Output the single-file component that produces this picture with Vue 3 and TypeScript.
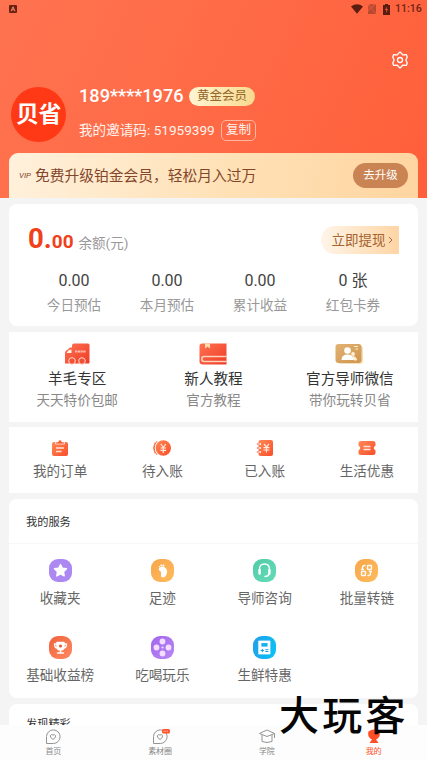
<script setup lang="ts">
interface Stat { value: string; label: string }
interface Item { icon: string; label: string }
interface Entry extends Item { note: string }

const stats: Stat[] = [
  { value: '0.00', label: '今日预估' },
  { value: '0.00', label: '本月预估' },
  { value: '0.00', label: '累计收益' },
  { value: '0 张', label: '红包卡券' },
]
const entries: Entry[] = [
  { icon: 'truck', label: '羊毛专区', note: '天天特价包邮' },
  { icon: 'book', label: '新人教程', note: '官方教程' },
  { icon: 'contact', label: '官方导师微信', note: '带你玩转贝省' },
]
const orders: Item[] = [
  { icon: 'clipboard', label: '我的订单' },
  { icon: 'coin', label: '待入账' },
  { icon: 'ledger', label: '已入账' },
  { icon: 'ticket', label: '生活优惠' },
]
const services: Item[] = [
  { icon: 'star', label: '收藏夹' },
  { icon: 'foot', label: '足迹' },
  { icon: 'headset', label: '导师咨询' },
  { icon: 'link', label: '批量转链' },
  { icon: 'trophy', label: '基础收益榜' },
  { icon: 'reel', label: '吃喝玩乐' },
  { icon: 'calc', label: '生鲜特惠' },
]
const tabs: Item[] = [
  { icon: 'home', label: '首页' },
  { icon: 'material', label: '素材圈' },
  { icon: 'school', label: '学院' },
  { icon: 'mine', label: '我的' },
]
</script>

<template>
  <div class="screen">
    <svg class="defs" width="0" height="0" aria-hidden="true">
      <defs>
        <linearGradient id="red" x1="0" y1="0" x2="1" y2="1"><stop offset="0" stop-color="#ff7352" /><stop offset="1" stop-color="#ee3b26" /></linearGradient>
        <linearGradient id="orange" x1="0" y1="0" x2="1" y2="1"><stop offset="0" stop-color="#ff8a55" /><stop offset="1" stop-color="#f94d2b" /></linearGradient>
        <linearGradient id="gold" x1="0" y1="0" x2="1" y2="1"><stop offset="0" stop-color="#e2b273" /><stop offset="1" stop-color="#cf964e" /></linearGradient>
      </defs>
    </svg>
    <main class="content">
      <header class="header">
        <div class="status">
          <svg class="status-app" viewBox="0 0 8 8"><rect width="8" height="8" rx="1" fill="#69200f" /><path d="M2 6.300 4 1.800 6 6.300M3 4.800h2" fill="none" stroke="#f58b70" stroke-width="1" /></svg>
          <div class="status-right">
            <svg width="12" height="10" viewBox="0 0 12 10"><path d="M0 2.500Q6-1.800 12 2.500L6 9.800Z" fill="#5b1d10" /></svg>
            <svg width="8" height="10" viewBox="0 0 8 10"><path d="M8 0v10H0V7Z" fill="#b84830" /><path d="M0 2 2 0h5L0 7ZM1 1l7 9" fill="#b84830" stroke="#e65b3e" stroke-width=".8" /></svg>
            <svg width="7" height="11" viewBox="0 0 7 11"><path d="M2 0h3v1h2v10H0V1h2Z" fill="#5b1d10" /><path d="M4 2.500 2 6h1.500L3 9l2-3.800H3.500Z" fill="#f36546" /></svg>
            <span class="time">11:16</span>
          </div>
        </div>
        <svg class="gear" viewBox="0 0 18 18" fill="none" stroke="#fff" stroke-width="1.300" stroke-linejoin="round">
          <path d="M7.200 2.700 9 .9l1.800 1.800.8 1.200 3.900-.2.700 2.500-1.400 2.800 1.400 2.800-.7 2.500-3.900-.2-.8 1.200L9 17.100l-1.800-1.800-.8-1.200-3.900.2-.7-2.500L3.200 9 1.800 6.200l.7-2.500 3.900.2Z" /><circle cx="9" cy="9" r="2.500" />
        </svg>
        <section class="profile">
          <div class="avatar">贝省</div>
          <div class="profile-info">
            <div class="name-row"><span class="phone">189****1976</span><span class="level">黄金会员</span></div>
            <div class="code-row"><span>我的邀请码: 51959399</span><span class="copy">复制</span></div>
          </div>
        </section>
        <section class="vip">
          <span class="vip-mark">VIP</span>
          <span class="vip-text">免费升级铂金会员，轻松月入过万</span>
          <span class="upgrade">去升级</span>
        </section>
      </header>

      <section class="card wallet">
        <div class="balance-row">
          <div class="balance"><b class="big">0.</b><b class="cents">00</b><span class="unit">余额(元)</span></div>
          <div class="withdraw">立即提现<svg width="5" height="8" viewBox="0 0 5 8"><path d="m1 1 3 3-3 3" fill="none" stroke="#ad6937" /></svg></div>
        </div>
        <div class="stats">
          <div v-for="s in stats" :key="s.label" class="stat"><span class="value">{{ s.value }}</span><span class="stat-label">{{ s.label }}</span></div>
        </div>
      </section>

      <section class="card entries">
        <div v-for="e in entries" :key="e.icon" class="entry">
          <svg v-if="e.icon === 'truck'" width="26" height="22" viewBox="0 0 26 22">
            <path d="M10 .5h14q1.500 0 1.500 1.500v17.500q0 1-1 1H1V10q0-2 2-3l3-2.500h2V2.500q0-2 2-2Z" fill="url(#red)" /><path d="M2.500 10 5 6.800h2.500v3.300Z" fill="#fff3e9" /><path d="M11 8.500h11" stroke="#ffb9a6" stroke-width="1.800" stroke-dasharray="2.300 .4" /><circle cx="8" cy="18" r="3.300" fill="#f25134" stroke="#ffd9ce" stroke-width="1" /><circle cx="18" cy="18" r="3.300" fill="#f25134" stroke="#ffd9ce" stroke-width="1" />
          </svg>
          <svg v-else-if="e.icon === 'book'" width="28" height="22" viewBox="0 0 28 22">
            <path d="M3 .5h24.500v21H4q-3.500 0-3.500-3V3q0-2.500 2.500-2.500Z" fill="url(#red)" /><path d="M6 .5h5v5l-2.500-1.700L6 5.500Z" fill="#ffdca9" /><path d="M27.500 13.500H5q-2.200 0-2.200 2.500T5 18.500h22.500" fill="none" stroke="#ffd3bb" stroke-width="1.600" />
          </svg>
          <svg v-else class="contact-icon" width="28" height="22" viewBox="0 0 28 22">
            <rect x="3" y="3" width="25" height="18" rx="3" fill="#f5dfb9" /><rect x=".5" y="1" width="26" height="19" rx="3" fill="url(#gold)" /><circle cx="12.500" cy="7.500" r="3.300" fill="#fff" /><path d="M6.500 17q0-5.500 6-5.500t6 5.500Z" fill="#fff" /><circle cx="18" cy="11" r="1.900" fill="#fff0d8" /><path d="M18 13.500q3.500.5 3.500 3.500H19ZM19 3.500h4M20.500 6H23" fill="#fff0d8" stroke="#fff0d8" />
          </svg>
          <span class="entry-title">{{ e.label }}</span>
          <span class="entry-note">{{ e.note }}</span>
        </div>
      </section>

      <section class="card orders">
        <div v-for="o in orders" :key="o.icon" class="order">
          <svg width="18" height="18" viewBox="0 0 18 18">
            <g v-if="o.icon === 'clipboard'"><rect x="1" y="3" width="16" height="14" rx="2" fill="url(#orange)" /><path d="M4.500 5V3H7l1-2h2l1 2h2.500v2Z" fill="#f75a34" stroke="#fff" stroke-width=".7" /><path d="M5 9h8M5 12.500h5.500" stroke="#ffe1d4" stroke-width="1.300" /></g>
            <g v-else-if="o.icon === 'coin'"><path d="M4 2Q-1.500 9 4 16M2 3.500q-3 5.500 0 11" fill="none" stroke="#f76b45" stroke-width=".9" /><circle cx="10.300" cy="9" r="7.700" fill="url(#orange)" /><path d="m7.800 5 2.500 3.500L12.800 5M7.500 9h5.600M7.500 11.300h5.600M10.300 8.500V14" fill="none" stroke="#ffeadb" stroke-width="1.200" /></g>
            <g v-else-if="o.icon === 'ledger'"><rect x="2.500" y="1" width="14.500" height="16" rx="2" fill="url(#orange)" /><path d="M.8 5h4M.8 9h4M.8 13h4" stroke="#fff" stroke-width="2" /><path d="M.8 5h3M.8 9h3M.8 13h3" stroke="#f25332" stroke-width="1.100" /><path d="m8 5 2.500 3L13 5M7.500 8.700h6M7.500 11h6M10.500 8v5.500" fill="none" stroke="#ffeadb" stroke-width="1.200" /></g>
            <g v-else><path d="M3 2h12q2.500 0 2.500 2.500v2q-3.500 2.500 0 5v2q0 2.500-2.500 2.500H3Q.5 16 .5 13.500v-2q3.500-2.500 0-5v-2Q.5 2 3 2Z" fill="url(#orange)" /><path d="M5.500 7.500h7M5.500 10.500h7" stroke="#ffe5d7" stroke-width="1.300" /></g>
          </svg>
          <span class="label">{{ o.label }}</span>
        </div>
      </section>

      <section class="card services">
        <h2 class="section-title">我的服务</h2>
        <div class="service-grid">
          <div v-for="s in services" :key="s.icon" class="service">
            <span class="tile" :class="s.icon">
              <svg width="23" height="23" viewBox="0 0 23 23" fill="none" stroke="#fff" stroke-width="1.400" stroke-linecap="round" stroke-linejoin="round">
                <path v-if="s.icon === 'star'" d="m11.500 5.500 1.900 3.700 4.100.6-3 2.900.7 4.200-3.700-2-3.700 2 .7-4.200-3-2.900 4.100-.6Z" fill="#fff" />
                <g v-else-if="s.icon === 'foot'" fill="#fff" stroke="none"><path d="M8 9.300q2.700-2.900 5.400-1.200 3.800 2.600 2.400 6.500-1.300 4-3.800 3.900-2.600-.1-1.900-3.600.3-2.100-1.100-2.800-2-.9-1-2.800Z" /><circle cx="8.500" cy="7.800" r=".7" /><circle cx="10.200" cy="6.500" r=".9" /><circle cx="12.400" cy="6.500" r="1.100" /></g>
                <g v-else-if="s.icon === 'headset'"><path d="M6.500 12V10.500Q6.500 5 11.500 5t5 5.500V12" stroke-width="1.300" /><path d="M6.600 11v3.500M16.400 11v3.500" stroke-width="2.500" /><path d="M16 15q-.5 2.500-4 2.500" /></g>
                <g v-else-if="s.icon === 'link'" stroke-width="1.300"><rect x="12.500" y="6.500" width="4" height="4" rx=".5" /><rect x="6.500" y="12.500" width="4" height="4" rx=".5" /><path d="M10 6.500h-.5q-2 0-2 2v2M13 16.500h.5q2 0 2-2v-2M6.500 10.500h2M14.500 12.500h2" /></g>
                <g v-else-if="s.icon === 'trophy'"><path d="M8 6.500h7v4q0 3.500-3.500 3.500T8 10.500Z" fill="#fff" /><path d="M8 8H5.500q0 4 3 4M15 8h2.500q0 4-3 4M11.500 14v3M8.500 17h6" /><circle cx="11.500" cy="10" r="1.600" fill="#ee5936" stroke="none" /></g>
                <g v-else-if="s.icon === 'reel'" fill="#f4deff" stroke="none"><circle cx="11.500" cy="5.500" r="2.900" /><circle cx="17.500" cy="11.500" r="2.900" /><circle cx="11.500" cy="17.500" r="2.900" /><circle cx="5.500" cy="11.500" r="2.900" /><circle cx="11.500" cy="11.500" r="1.100" /></g>
                <g v-else><path d="M6 5h11v13H6ZM8 7v4h7V7Z" fill="#fff" fill-rule="evenodd" stroke-width=".8" /><path d="M8 14.500h2.600M9.300 13.200v2.600M12.700 13.700h2.300M12.700 15.500H15" stroke="#159feb" stroke-width="1" /></g>
              </svg>
            </span>
            <span class="label">{{ s.label }}</span>
          </div>
        </div>
      </section>

      <section class="card discover"><h2 class="section-title">发现精彩</h2></section>
    </main>

    <nav class="tabs">
      <div v-for="t in tabs" :key="t.icon" class="tab" :class="{ active: t.icon === 'mine' }">
        <svg width="20" height="17" viewBox="0 0 20 17" fill="none" stroke="#949494" stroke-width="1">
          <g v-if="t.icon === 'home' || t.icon === 'material'"><path d="M3.500 15.500V8.500a6.800 6.800 0 1 1 6.800 7Z" /><path d="M10 11.500Q7 9.500 7.300 7.700 8.300 6 10 7q1.700-1 2.700.7.300 1.800-2.700 3.800Z" /><rect v-if="t.icon === 'material'" x="12" y="1" width="8" height="4.500" rx="1.500" fill="#ff532b" stroke="none" /><path v-if="t.icon === 'material'" d="M13.500 3.200h5" stroke="#ffc0ab" stroke-dasharray="1.200 .5" /></g>
          <g v-else-if="t.icon === 'school'"><path d="m2.500 5.500 7.500-3.500 7.500 3.500-7.500 3ZM5 7v6.500q5 2 10 0V7M17.500 5.500V10" /></g>
          <g v-else fill="#ff4d25" stroke="none"><path d="M4.500 3.500q5.500-4 11 0 1.500 5.500-3.500 8l2.500 3.500h-9L8 11.500Q3 9 4.500 3.500Z" /></g>
        </svg>
        <span>{{ t.label }}</span>
      </div>
    </nav>
    <div class="watermark">大玩客</div>
  </div>
</template>

<style>
body { margin: 0; overflow: hidden; }
</style>
<style scoped>
* { box-sizing: border-box; }
.screen { position: relative; display: flex; flex-direction: column; width: 427px; height: 760px; overflow: hidden; background: #f4f4f4; font-family: Roboto, "Noto Sans CJK SC", sans-serif; color: #444; white-space: nowrap; }
svg { display: block; flex-shrink: 0; }
.defs { position: absolute; }
.content { flex: 1; min-height: 0; overflow: hidden; }
.header { height: 198px; display: flex; flex-direction: column; background: linear-gradient(115deg, #ff7350 0%, #ff6b47 45%, #ff5f3a 100%); }
.status { height: 18px; padding: 0 6px 0 9px; display: flex; justify-content: space-between; align-items: center; }
.status-app { width: 8px; height: 8px; }
.status-right { display: flex; align-items: center; }
.status-right svg:nth-child(2) { margin-left: 5px; }
.status-right svg:nth-child(3) { margin-left: 7px; }
.time { width: 26px; margin-left: 5px; font-size: 10.500px; line-height: 18px; font-weight: 500; color: #6b2514; }
.gear { width: 18px; height: 18px; align-self: flex-end; margin: 33px 18px 0 0; }
.profile { display: flex; height: 63px; margin: 14px 0 0 11px; }
.avatar { width: 55px; height: 55px; margin-top: 4px; border-radius: 50%; background: #ff3916; color: #fff; font-size: 23px; line-height: 56px; font-weight: 700; text-align: center; letter-spacing: -0.5px; }
.profile-info { margin-left: 13px; }
.name-row { display: flex; align-items: center; height: 26px; color: #fff; }
.phone { width: 110px; font-size: 18.200px; line-height: 26px; font-weight: 500; }
.level { width: 66px; height: 19px; border-radius: 10px; background: linear-gradient(90deg, #fff5d3, #f8d98e); color: #94672b; font-size: 12.500px; line-height: 18px; text-align: center; }
.code-row { display: flex; align-items: center; height: 22px; margin-top: 10px; font-size: 13.600px; line-height: 20px; color: #fff3ec; }
.code-row > span:first-child { width: 142px; }
.copy { width: 35px; height: 21px; border: 1px solid #ffb69f; border-radius: 5px; line-height: 18px; font-size: 12.500px; text-align: center; }
.vip { display: flex; align-items: center; width: 409px; height: 45px; margin: 8px 0 0 9px; padding: 0 10px; flex-shrink: 0; border-radius: 9px 9px 0 0; background: linear-gradient(100deg, #fff1dc, #ffe2b8 50%, #ffd5a0); color: #84462a; }
.vip-mark { width: 16px; font-size: 8px; font-style: italic; font-weight: 400; }
.vip-text { font-size: 14.750px; line-height: 22px; flex: 1; }
.upgrade { width: 55px; height: 25px; border-radius: 13px; background: #ca8454; color: #fff; font-size: 11.500px; line-height: 24px; text-align: center; }
.card { width: 409px; margin-left: 9px; background: #fff; }
.wallet { height: 122px; margin-top: 6px; padding: 22px 19px 0; border-radius: 8px; }
.balance-row { display: flex; justify-content: space-between; height: 28px; }
.balance { display: flex; align-items: baseline; height: 28px; line-height: 25px; color: #f0411b; }
.big { font-size: 27.500px; }
.cents { font-size: 19px; }
.unit { margin-left: 5px; font-size: 13.500px; color: #999; }
.withdraw { display: flex; align-items: center; justify-content: center; gap: 2px; width: 78px; height: 28px; padding-left: 4px; border-radius: 14px 0 0 14px; background: linear-gradient(90deg, #fff5e9, #fed5a4); color: #a56331; font-size: 13.500px; line-height: 26px; }
.stats { display: grid; grid-template-columns: repeat(4, 93px); margin-top: 14px; margin-left: -0.500px; }
.stat, .entry, .order, .service, .tab { display: flex; flex-direction: column; align-items: center; }
.value { height: 25px; line-height: 25px; font-size: 16px; color: #444; }
.stat-label { font-size: 13.600px; line-height: 25px; color: #999; }
.entries { display: grid; grid-template-columns: repeat(3, 1fr); height: 90px; margin-top: 6px; padding-top: 11px; }
.contact-icon { margin-left: -2px; }
.entry-title { margin-top: 4px; font-size: 14.600px; line-height: 21px; color: #333; }
.entry-note { font-size: 13.600px; line-height: 20px; color: #888; }
.orders { display: grid; grid-template-columns: repeat(4, 1fr); height: 66px; margin-top: 5px; padding-top: 12px; }
.label { font-size: 13.600px; line-height: 20px; color: #666; }
.order .label { margin-top: 4px; }
.services { height: 199px; margin-top: 6px; border-radius: 8px; }
.section-title { height: 45px; margin: 0; padding-left: 17px; border-bottom: 1px solid #f7f7f7; font-size: 11.200px; line-height: 47px; font-weight: 400; color: #333; }
.service-grid { display: grid; grid-template-columns: repeat(4, 1fr); grid-auto-rows: 76.500px; padding-top: 15px; }
.tile { width: 23px; height: 23px; border-radius: 9px; background: #ac88f2; }
.tile.foot, .tile.link { background: linear-gradient(135deg, #f7a64a, #ffbb5c); }
.tile.headset { background: linear-gradient(135deg, #50cba7, #65dcb9); }
.tile.trophy { background: linear-gradient(135deg, #ef633c, #ff8961); }
.tile.reel { background: linear-gradient(135deg, #a266ec, #b888f7); }
.tile.calc { background: linear-gradient(110deg, #229eea, #08c4f6); }
.service .label { margin-top: 6px; }
.discover { height: 80px; margin-top: 6px; border-radius: 8px; }
.discover .section-title { line-height: 41px; }
.tabs { display: grid; grid-template-columns: repeat(4, 1fr); height: 35px; padding-top: 3px; background: #fdfdfd; }
.tab { font-size: 8px; line-height: 12px; color: #888; }
.tab.active { color: #ff4d25; }
.tab span { margin-top: 1px; }
.watermark { position: absolute; left: 279px; top: 692px; font-size: 40px; line-height: 50px; font-weight: 500; letter-spacing: 3.300px; color: #050505; }
</style>
